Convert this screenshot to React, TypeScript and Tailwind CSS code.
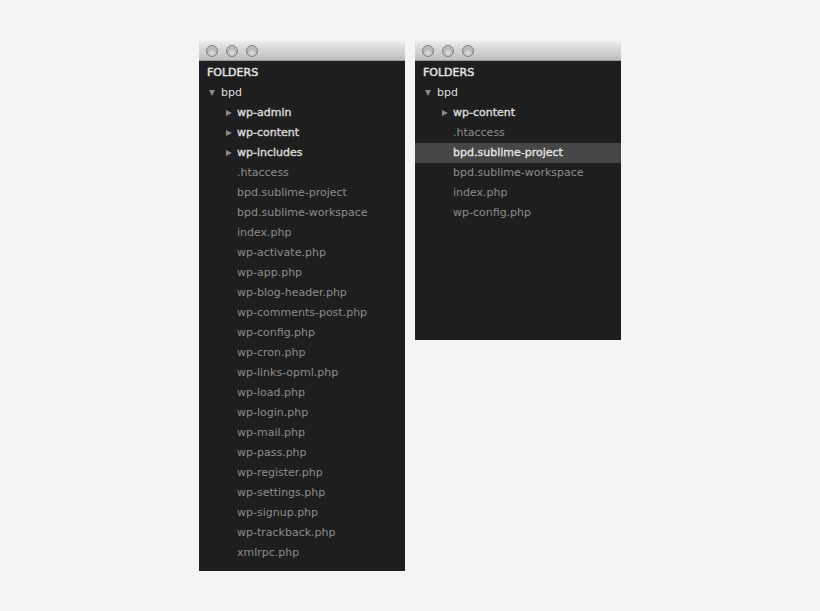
import React from "react";

type Row = { name: string; kind: "header" | "open" | "closed" | "file"; depth: number; selected?: boolean };

const left: Row[] = [
  { name: "FOLDERS", kind: "header", depth: 0 },
  { name: "bpd", kind: "open", depth: 0 },
  { name: "wp-admin", kind: "closed", depth: 1 },
  { name: "wp-content", kind: "closed", depth: 1 },
  { name: "wp-includes", kind: "closed", depth: 1 },
  ...[
    ".htaccess",
    "bpd.sublime-project",
    "bpd.sublime-workspace",
    "index.php",
    "wp-activate.php",
    "wp-app.php",
    "wp-blog-header.php",
    "wp-comments-post.php",
    "wp-config.php",
    "wp-cron.php",
    "wp-links-opml.php",
    "wp-load.php",
    "wp-login.php",
    "wp-mail.php",
    "wp-pass.php",
    "wp-register.php",
    "wp-settings.php",
    "wp-signup.php",
    "wp-trackback.php",
    "xmlrpc.php",
  ].map((n) => ({ name: n, kind: "file" as const, depth: 1 })),
];

const right: Row[] = [
  { name: "FOLDERS", kind: "header", depth: 0 },
  { name: "bpd", kind: "open", depth: 0 },
  { name: "wp-content", kind: "closed", depth: 1 },
  { name: ".htaccess", kind: "file", depth: 1 },
  { name: "bpd.sublime-project", kind: "file", depth: 1, selected: true },
  { name: "bpd.sublime-workspace", kind: "file", depth: 1 },
  { name: "index.php", kind: "file", depth: 1 },
  { name: "wp-config.php", kind: "file", depth: 1 },
];

function Dot() {
  return (
    <div className="h-[12px] w-[12px] rounded-full border border-[#7d7d7d] bg-[radial-gradient(circle_at_50%_70%,#e4e4e4_0%,#b4b4b4_55%,#8f8f8f_100%)] shadow-[inset_0_1px_1px_rgba(255,255,255,0.6)]" />
  );
}

function TreeRow({ r }: { r: Row }) {
  if (r.kind === "header") {
    return (
      <div className="flex h-[20px] items-center pl-[8px] text-[11px] text-[#e2e2e2] [-webkit-text-stroke:0.45px_#e2e2e2]">
        {r.name}
      </div>
    );
  }
  const base = r.depth === 0 ? "pl-[10px]" : "pl-[27px]";
  return (
    <div className={`flex h-[20px] items-center ${base} ${r.selected ? "bg-[#464646]" : ""}`}>
      {r.kind === "open" ? (
        <span className="mr-[6px] inline-block h-0 w-0 border-x-[3.5px] border-t-[6px] border-x-transparent border-t-[#8a8a8a]" />
      ) : r.kind === "closed" ? (
        <span className="mr-[5px] inline-block h-0 w-0 border-y-[3.5px] border-l-[6px] border-y-transparent border-l-[#8a8a8a]" />
      ) : (
        <span className="mr-[11px] inline-block w-0" />
      )}
      <span
        className={
          r.kind === "open"
            ? "text-[#dcdcdc]"
            : r.kind === "closed"
            ? "text-[#dadada] [-webkit-text-stroke:0.4px_#dadada]"
            : r.selected
            ? "text-[#e8e8e8] [-webkit-text-stroke:0.3px_#e8e8e8]"
            : "text-[#8c8c8c]"
        }
      >
        {r.name}
      </span>
    </div>
  );
}

function Win({ rows, bodyH }: { rows: Row[]; bodyH: string }) {
  return (
    <div className="w-[206px]">
      <div className="flex h-[20px] items-center gap-[8px] border-b border-[#9a9a9a] bg-gradient-to-b from-[#ececec] to-[#bdbdbd] pl-[7px]">
        <Dot />
        <Dot />
        <Dot />
      </div>
      <div className={`${bodyH} bg-[#1e1e1e] pt-[2px]`}>
        {rows.map((r, i) => (
          <TreeRow key={i} r={r} />
        ))}
      </div>
    </div>
  );
}

export default function App() {
  return (
    <div
      className="flex h-[611px] w-[820px] items-start gap-[10px] bg-[#f4f4f4] pl-[199px] pt-[41px] text-[11px]"
      style={{ fontFamily: '"DejaVu Sans", "Liberation Sans", sans-serif' }}
    >
      <Win rows={left} bodyH="h-[510px]" />
      <Win rows={right} bodyH="h-[279px]" />
    </div>
  );
}
